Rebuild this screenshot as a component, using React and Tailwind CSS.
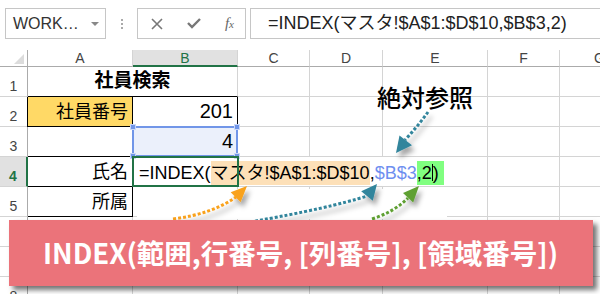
import React from 'react';

// Excel-like sheet: INDEX formula explanation
const FONT = "font-['Liberation_Sans','Noto_Sans_CJK_JP',sans-serif]";

const RowHead = ({ n, active }) =>
  active ? (
    <div className="flex items-end justify-center bg-[#e1e1e1] border-r-2 border-b border-r-[#217346] border-b-[#d4d4d4] text-[14px] leading-none text-[#217346] font-bold pb-[3px]">
      {n}
    </div>
  ) : (
    <div className="flex items-end justify-center border-r border-b border-r-[#ababab] border-b-[#d4d4d4] text-[14px] leading-none text-[#444] pb-[3px]">
      {n}
    </div>
  );

const Blank = () => <div className="border-r border-b border-[#d4d4d4]" />;

const Blanks = ({ count }) => (
  <>
    {Array.from({ length: count }).map((_, i) => (
      <Blank key={i} />
    ))}
  </>
);

const Arrows = () => (
  <svg className="absolute inset-0 pointer-events-none" width="600" height="294">
    <defs>
      <filter id="sh" x="-50%" y="-50%" width="200%" height="200%">
        <feDropShadow dx="3" dy="5" stdDeviation="2.5" floodColor="#000" floodOpacity="0.35" />
      </filter>
    </defs>
    {/* pasted arrow picture has a white background */}
    <rect x="137" y="189" width="310" height="30" fill="#fff" />
    <g filter="url(#sh)">
      <path d="M428 112 Q418 126 405 140" stroke="#31859c" strokeWidth="3" strokeDasharray="3 2" fill="none" />
      <polygon points="396,153 399.5,135.5 412,145.3" fill="#31859c" />
    </g>
    <g filter="url(#sh)">
      <path d="M173 219 Q212 214 236 197" stroke="#f9a21e" strokeWidth="3" strokeDasharray="3 2" fill="none" />
      <polygon points="247,186 240.6,202.3 230.7,192.3" fill="#f9a21e" />
    </g>
    <g filter="url(#sh)">
      <path d="M250 222 Q330 208 367 196" stroke="#31859c" strokeWidth="3" strokeDasharray="3 2" fill="none" />
      <polygon points="377,184 372.8,200.8 361.2,191.2" fill="#31859c" />
    </g>
    <g filter="url(#sh)">
      <path d="M372 219 Q394 212 408 198" stroke="#5fa033" strokeWidth="3" strokeDasharray="3 2" fill="none" />
      <polygon points="419,186 413.2,202.5 403,192.9" fill="#5fa033" />
    </g>
  </svg>
);

export default function App() {
  return (
    <div className={`relative w-[600px] h-[294px] overflow-hidden bg-white text-black ${FONT}`}>
      {/* formula bar */}
      <div className="flex items-start h-[50px] pt-[8px]">
        <div className="ml-[5px] w-[101px] h-[31px] border border-[#c6c6c6] flex items-center pl-[7px] pr-[6px] text-[16px] text-[#333]">
          <span className="flex-1">WORK…</span>
          <span className="w-0 h-0 border-l-[4px] border-r-[4px] border-t-[4px] border-l-transparent border-r-transparent border-t-[#888]" />
        </div>
        <div className="w-[31px] h-[31px] flex flex-col items-center justify-center gap-[2px]">
          <span className="w-[2px] h-[2px] bg-[#aaa]" />
          <span className="w-[2px] h-[2px] bg-[#aaa]" />
          <span className="w-[2px] h-[2px] bg-[#aaa]" />
        </div>
        <div className="w-[109px] h-[31px] border border-[#c6c6c6] flex items-center justify-between pl-[13px] pr-[11px]">
          <svg width="12" height="12" viewBox="0 0 12 12">
            <path d="M1 1 L11 11 M11 1 L1 11" stroke="#777" strokeWidth="1.6" />
          </svg>
          <svg width="14" height="11" viewBox="0 0 14 11">
            <path d="M1 5 L5 9 L13 1" stroke="#777" strokeWidth="2.4" fill="none" />
          </svg>
          <span className="font-['Liberation_Serif',serif] italic text-[15px] text-[#666] leading-none">
            f<span className="text-[11px]">x</span>
          </span>
        </div>
        <div className="ml-[4px] flex-1 h-[31px] border-t border-b border-l border-[#c6c6c6] flex items-center pl-[17px] text-[18px] text-[#222] whitespace-nowrap">
          =INDEX(マスタ!$A$1:$D$10,$B$3,2)
        </div>
      </div>

      {/* sheet */}
      <div className="grid grid-cols-[28px_105px_105px_72px_73px_105px_72px_80px] grid-rows-[17px_repeat(8,30px)]">
        {/* column headers */}
        <div className="relative border-r border-b border-[#ababab]">
          <svg className="absolute right-[3px] bottom-[2px]" width="10" height="10" viewBox="0 0 10 10">
            <polygon points="10,0 10,10 0,10" fill="#dcdcdc" />
          </svg>
        </div>
        <div className="flex items-center justify-center border-r border-b border-r-[#d4d4d4] border-b-[#ababab] text-[14px] text-[#444] leading-none">A</div>
        <div className="flex items-center justify-center bg-[#e1e1e1] border-r border-b-2 border-r-[#d4d4d4] border-b-[#217346] text-[14px] text-[#217346] leading-none">B</div>
        <div className="flex items-center justify-center border-r border-b border-r-[#d4d4d4] border-b-[#ababab] text-[14px] text-[#444] leading-none">C</div>
        <div className="flex items-center justify-center border-r border-b border-r-[#d4d4d4] border-b-[#ababab] text-[14px] text-[#444] leading-none">D</div>
        <div className="flex items-center justify-center border-r border-b border-r-[#d4d4d4] border-b-[#ababab] text-[14px] text-[#444] leading-none">E</div>
        <div className="flex items-center justify-center border-r border-b border-r-[#d4d4d4] border-b-[#ababab] text-[14px] text-[#444] leading-none">F</div>
        <div className="flex items-center justify-center border-r border-b border-r-[#d4d4d4] border-b-[#ababab] text-[14px] text-[#444] leading-none">G</div>

        {/* row 1 */}
        <RowHead n="1" />
        <div className="col-span-2 flex items-end justify-center border-r border-b border-r-[#d4d4d4] border-b-black text-[19px] font-bold leading-none pb-[6px]">
          社員検索
        </div>
        <Blanks count={5} />

        {/* row 2 */}
        <RowHead n="2" />
        <div className="flex items-end justify-end bg-[#ffd966] border-l border-r border-b border-black -ml-px text-[18px] leading-none pr-[4px] pb-[5px]">
          社員番号
        </div>
        <div className="flex items-end justify-end border-r border-b border-black text-[20px] leading-none pr-[4px] pb-[5px]">
          201
        </div>
        <Blanks count={5} />

        {/* row 3 */}
        <RowHead n="3" />
        <div className="border-r border-b border-r-[#d4d4d4] border-b-black" />
        <div className="relative flex items-end justify-end bg-[#ebf0fb] border-r border-b border-[#d4d4d4] text-[20px] leading-none pr-[4px] pb-[5px]">
          4
          <div className="absolute -left-px -top-px -right-px -bottom-px border-2 border-[#7196e8]" />
          <span className="absolute -left-[3px] -top-[3px] w-[6px] h-[6px] bg-[#7196e8] border border-[#c9d7f7]" />
          <span className="absolute -right-[3px] -top-[3px] w-[6px] h-[6px] bg-[#7196e8] border border-[#c9d7f7]" />
          <span className="absolute -left-[3px] -bottom-[3px] w-[6px] h-[6px] bg-[#7196e8] border border-[#c9d7f7]" />
          <span className="absolute -right-[3px] -bottom-[3px] w-[6px] h-[6px] bg-[#7196e8] border border-[#c9d7f7]" />
        </div>
        <Blanks count={5} />

        {/* row 4 */}
        <RowHead n="4" active />
        <div className="flex items-end justify-end border-r border-b border-black text-[18px] leading-none pr-[4px] pb-[5px]">
          氏名
        </div>
        <div className="relative z-10 flex items-center border-b border-[#d4d4d4] whitespace-nowrap text-[18px] leading-none pl-[6px] pt-[2px]">
          <div className="absolute -left-px -top-px -right-px -bottom-px border-2 border-[#217346]" />
          <span>=INDEX(</span>
          <span className="bg-[#fde0b8] py-[3px]">マスタ!$A$1:$D$10</span>
          <span>,</span>
          <span className="text-[#6e8ff0]">$B$3</span>
          <span className="bg-[#80ff80] py-[3px] pr-[5px] flex items-center">
            ,2<span className="inline-block w-px h-[17px] bg-black" />)
          </span>
        </div>
        <div className="border-b border-[#d4d4d4]" />
        <div className="border-b border-[#d4d4d4]" />
        <Blanks count={3} />

        {/* row 5 */}
        <RowHead n="5" />
        <div className="flex items-end justify-end border-r border-b border-black text-[18px] leading-none pr-[4px] pb-[5px]">
          所属
        </div>
        <Blanks count={6} />

        {/* rows 6-8 */}
        <RowHead n="6" />
        <Blanks count={7} />
        <RowHead n="7" />
        <Blanks count={7} />
        <RowHead n="8" />
        <Blanks count={7} />
      </div>

      <Arrows />

      <div className="absolute left-[377px] top-[85px] text-[24px] leading-none font-medium font-['Noto_Sans_CJK_JP',sans-serif]">
        絶対参照
      </div>

      <div className="absolute left-[9px] top-[220px] w-[584px] h-[66px] bg-[#eb737a] shadow-[4px_4px_5px_rgba(0,0,0,0.55)] flex items-center pl-[34px] text-white text-[27.5px] font-bold font-['Noto_Sans_CJK_JP',sans-serif] whitespace-nowrap">
        INDEX(範囲,行番号, [列番号], [領域番号])
      </div>
    </div>
  );
}
